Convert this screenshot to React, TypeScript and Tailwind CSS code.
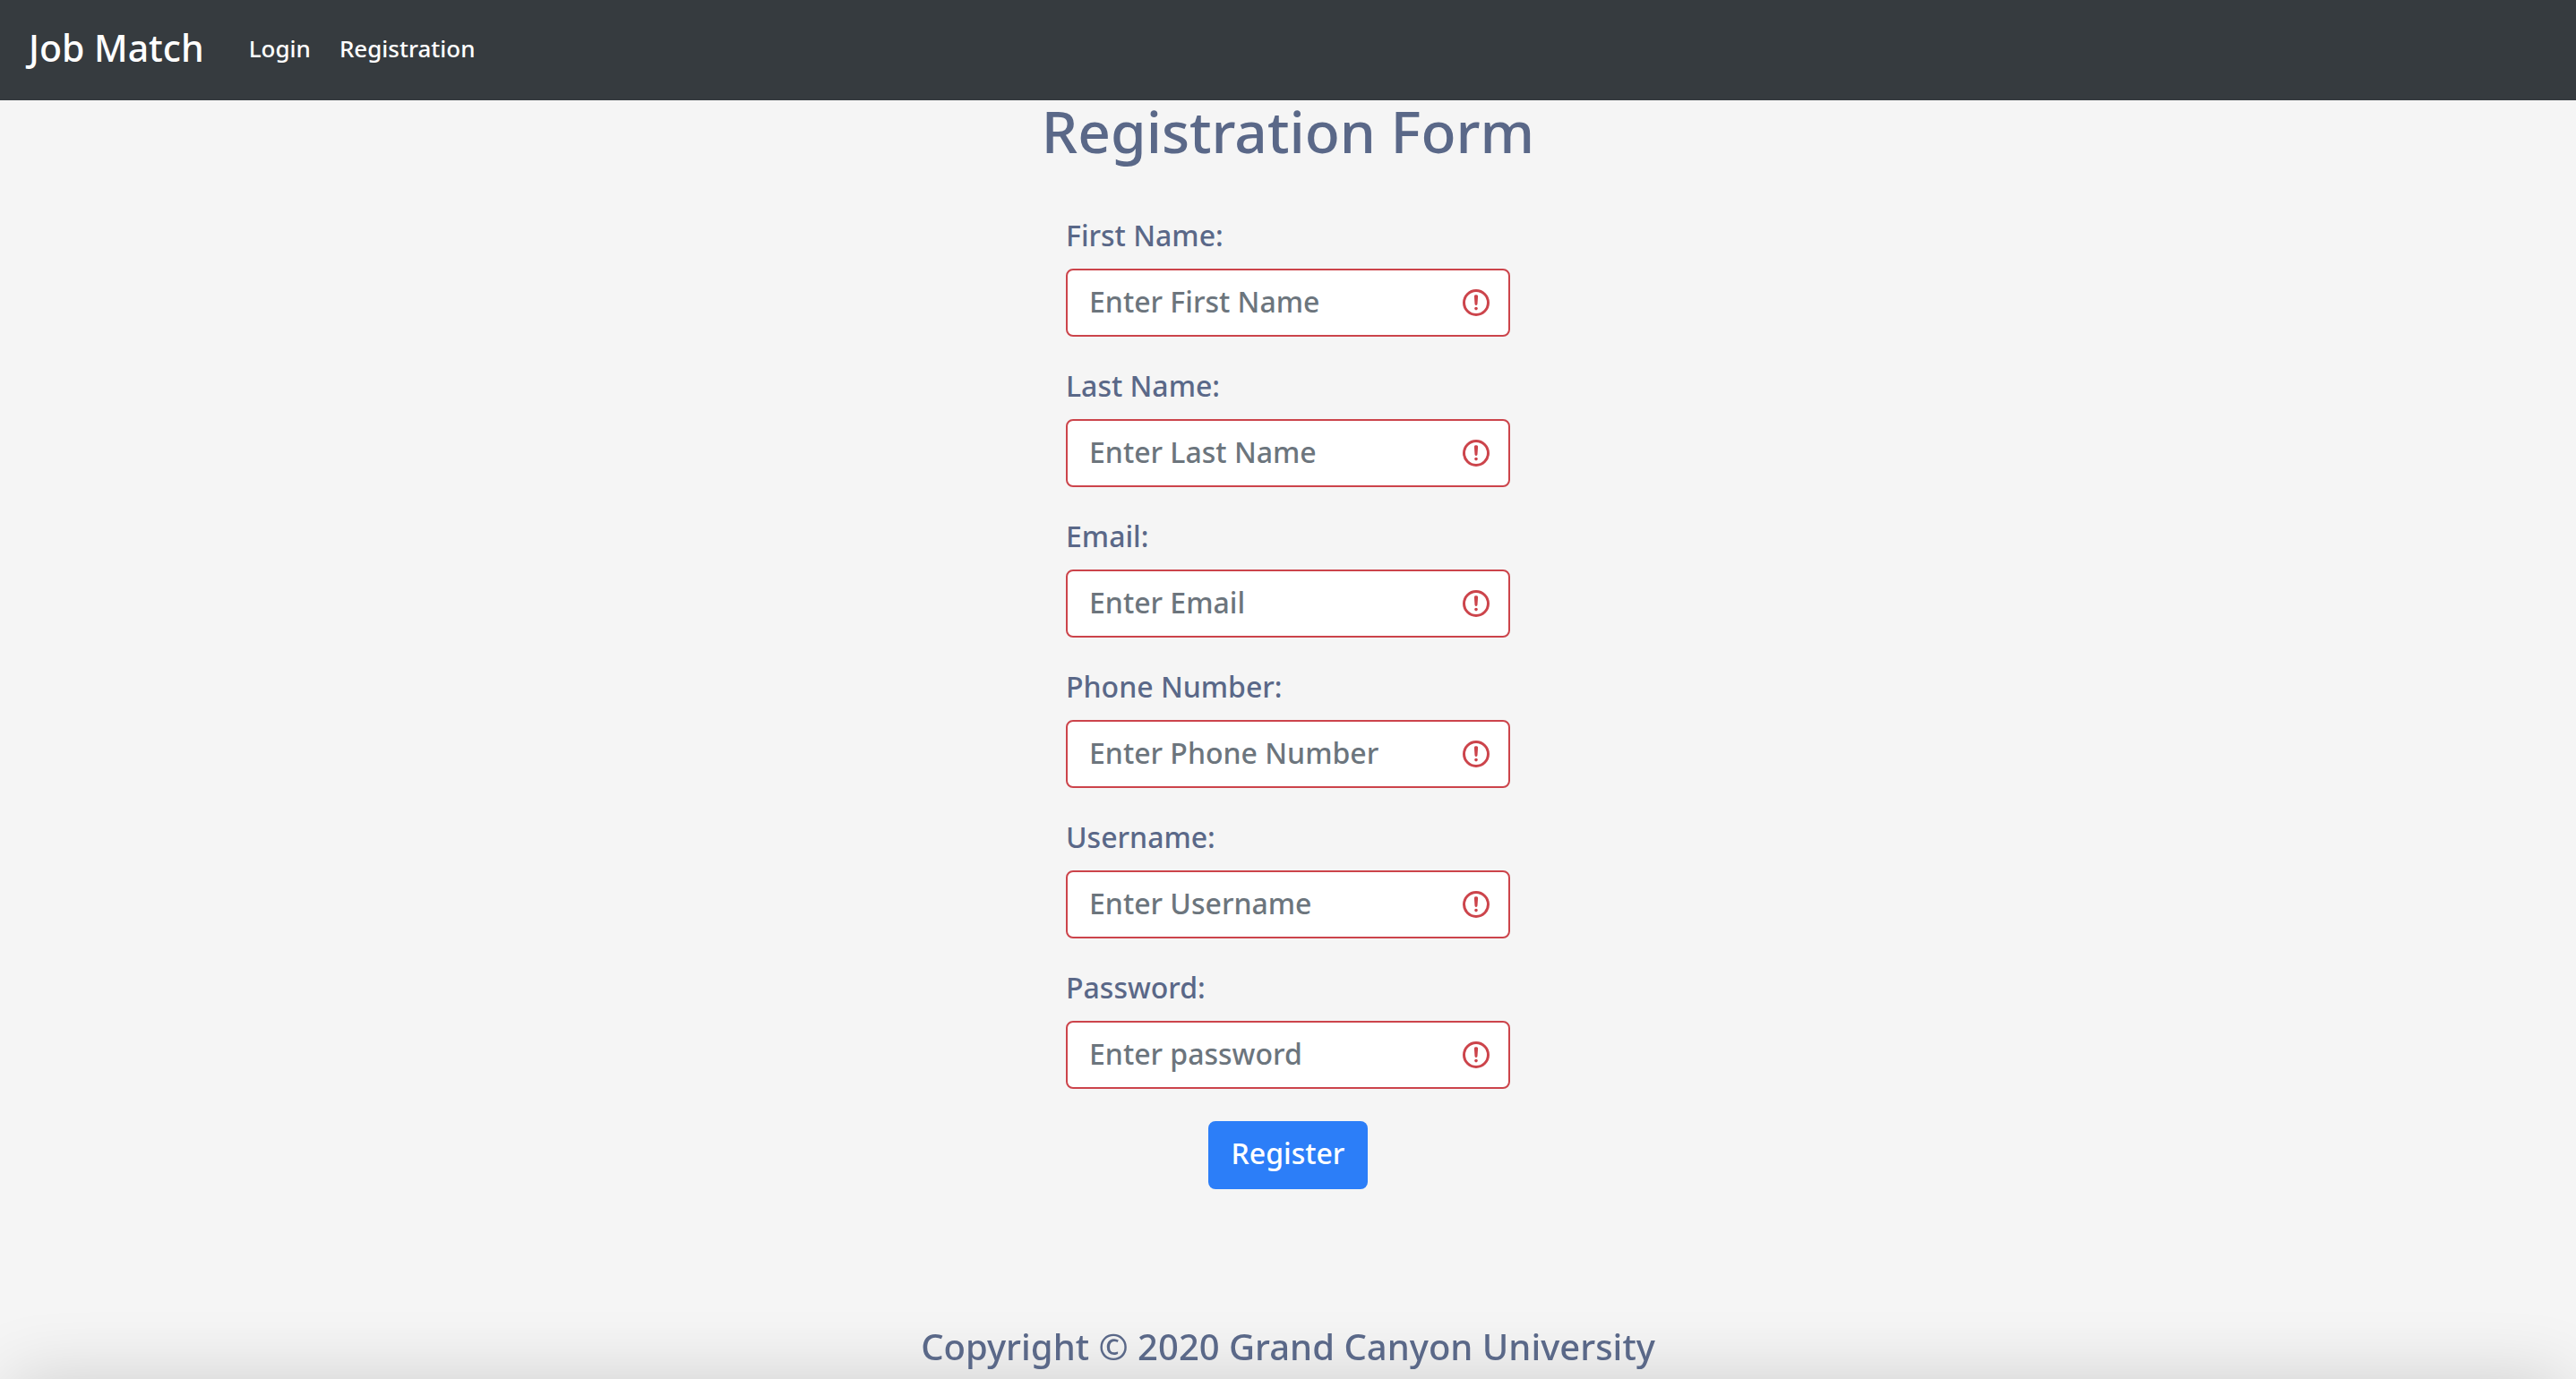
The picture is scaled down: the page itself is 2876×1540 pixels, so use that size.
type Field = { id: string; label: string; placeholder: string; type: string };

const fields: Field[] = [
  { id: "firstName", label: "First Name:", placeholder: "Enter First Name", type: "text" },
  { id: "lastName", label: "Last Name:", placeholder: "Enter Last Name", type: "text" },
  { id: "email", label: "Email:", placeholder: "Enter Email", type: "email" },
  { id: "phone", label: "Phone Number:", placeholder: "Enter Phone Number", type: "tel" },
  { id: "username", label: "Username:", placeholder: "Enter Username", type: "text" },
  { id: "password", label: "Password:", placeholder: "Enter password", type: "password" },
];

function InvalidIcon() {
  return (
    <svg
      viewBox="0 0 12 12"
      fill="none"
      aria-hidden="true"
      className="pointer-events-none absolute top-5 right-5 size-9 text-[#cc444b]"
    >
      <circle cx="6" cy="6" r="4.5" stroke="currentColor" />
      <path d="M5.8 3.6h.4L6 6.5z" stroke="currentColor" strokeLinejoin="round" />
      <circle cx="6" cy="8.2" r=".6" fill="currentColor" />
    </svg>
  );
}

function FormField({ id, label, placeholder, type }: Field) {
  return (
    <div className="flex flex-col gap-4">
      <label htmlFor={id} className="leading-[42px]">
        {label}
      </label>
      <div className="relative">
        <input
          id={id}
          name={id}
          type={type}
          placeholder={placeholder}
          required
          aria-invalid="true"
          className="block h-[76px] w-full rounded-lg border-2 border-[#cc444b] bg-white pr-16 pb-1 pl-6 text-[#495057] placeholder:text-[#6c757d] placeholder:opacity-100"
        />
        <InvalidIcon />
      </div>
    </div>
  );
}

export default function App() {
  return (
    <div className="relative flex min-h-screen flex-col bg-[#f5f5f5] font-['Noto_Sans',sans-serif] text-[32px] font-medium text-[#5a6888]">
      <header className="h-28 bg-[#363b3f] pb-1 text-white">
        <nav className="flex h-full items-center px-8">
          <a href="#" className="mr-[50px] text-[41px]">
            Job Match
          </a>
          <div className="flex items-center gap-8 text-[26px]">
            <a href="#login">Login</a>
            <a href="#registration">Registration</a>
          </div>
        </nav>
      </header>

      <main className="flex flex-col items-center">
        <h1 className="text-center text-[64px] leading-[70px]">Registration Form</h1>
        <form className="mt-[60px] flex w-[496px] flex-col gap-[34px]">
          {fields.map((field) => (
            <FormField key={field.id} {...field} />
          ))}
          <button
            type="submit"
            className="mt-0.5 h-[76px] self-center rounded-lg bg-[#2c7ef8] px-[26px] pb-1 text-white"
          >
            Register
          </button>
        </form>
      </main>

      <div
        aria-hidden="true"
        className="pointer-events-none fixed inset-x-3 top-full h-40 shadow-[0_0_80px_rgba(0,0,0,0.16)]"
      />
      <footer className="relative mt-36 pb-1 text-center text-[40px] leading-[64px]">
        Copyright © 2020 Grand Canyon University
      </footer>
    </div>
  );
}
